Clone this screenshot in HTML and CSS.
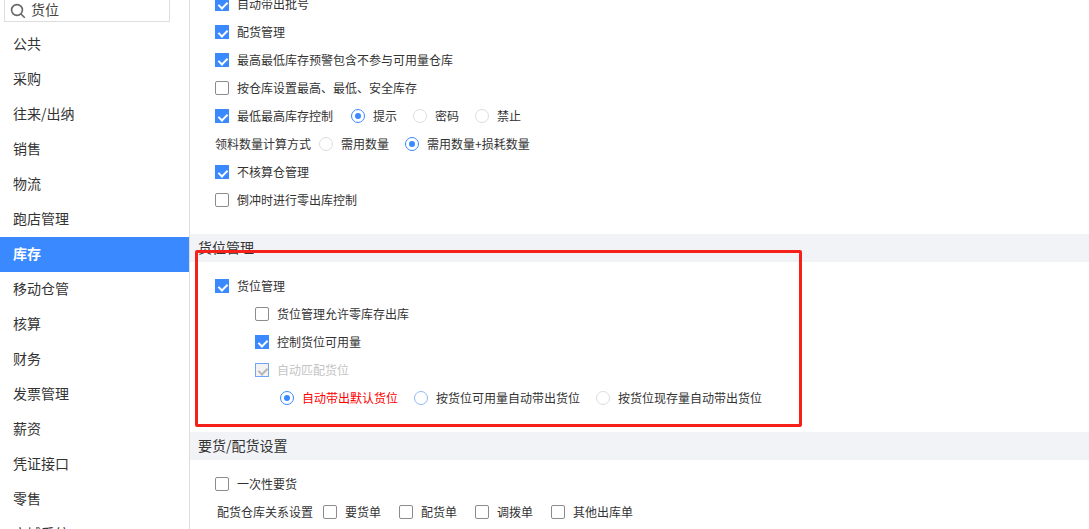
FILE: index.html
```html
<!DOCTYPE html>
<html lang="zh-CN">
<head>
<meta charset="utf-8">
<title>货位设置</title>
<link rel="stylesheet" href="styles.css">
</head>
<body>
<div class="page">
  <aside class="sidebar">
    <div class="search">
      <svg class="search-icon" width="16" height="16" viewBox="0 0 16 16"><circle cx="7" cy="7" r="5.4" fill="none" stroke="#666" stroke-width="1.6"/><path d="M11 11l3.8 3.8" stroke="#666" stroke-width="1.6" fill="none"/></svg>
      <span>货位</span>
    </div>
    <nav class="menu">
      <a class="menu-item">公共</a>
      <a class="menu-item">采购</a>
      <a class="menu-item">往来/出纳</a>
      <a class="menu-item">销售</a>
      <a class="menu-item">物流</a>
      <a class="menu-item">跑店管理</a>
      <a class="menu-item active">库存</a>
      <a class="menu-item">移动仓管</a>
      <a class="menu-item">核算</a>
      <a class="menu-item">财务</a>
      <a class="menu-item">发票管理</a>
      <a class="menu-item">薪资</a>
      <a class="menu-item">凭证接口</a>
      <a class="menu-item">零售</a>
      <a class="menu-item">商城系统</a>
    </nav>
  </aside>
  <main class="content">
    <section class="group group-first">
      <div class="row"><i class="check on"></i><span>自动带出批号</span></div>
      <div class="row"><i class="check on"></i><span>配货管理</span></div>
      <div class="row"><i class="check on"></i><span>最高最低库存预警包含不参与可用量仓库</span></div>
      <div class="row"><i class="check"></i><span>按仓库设置最高、最低、安全库存</span></div>
      <div class="row">
        <i class="check on"></i><span class="label-wide">最低最高库存控制</span>
        <span class="opts"><span class="opt"><i class="radio on"></i>提示</span><span class="opt"><i class="radio"></i>密码</span><span class="opt"><i class="radio"></i>禁止</span></span>
      </div>
      <div class="row">
        <span class="label-tight">领料数量计算方式</span>
        <span class="opts"><span class="opt"><i class="radio"></i>需用数量</span><span class="opt"><i class="radio on"></i>需用数量+损耗数量</span></span>
      </div>
      <div class="row"><i class="check on"></i><span>不核算仓管理</span></div>
      <div class="row"><i class="check"></i><span>倒冲时进行零出库控制</span></div>
    </section>
    <h2 class="section-title first-title">货位管理</h2>
    <section class="group group-bin">
      <div class="row"><i class="check on"></i><span>货位管理</span></div>
      <div class="row sub"><i class="check"></i><span>货位管理允许零库存出库</span></div>
      <div class="row sub"><i class="check on"></i><span>控制货位可用量</span></div>
      <div class="row sub disabled"><i class="check dim"></i><span>自动匹配货位</span></div>
      <div class="row subsub">
        <span class="opts"><span class="opt red"><i class="radio on"></i>自动带出默认货位</span><span class="opt"><i class="radio blue"></i>按货位可用量自动带出货位</span><span class="opt"><i class="radio"></i>按货位现存量自动带出货位</span></span>
      </div>
    </section>
    <h2 class="section-title">要货/配货设置</h2>
    <section class="group group-last">
      <div class="row"><i class="check"></i><span>一次性要货</span></div>
      <div class="row bills">
        <span class="bills-label">配货仓库关系设置</span>
        <span class="bill"><i class="check"></i>要货单</span>
        <span class="bill"><i class="check"></i>配货单</span>
        <span class="bill"><i class="check"></i>调拨单</span>
        <span class="bill"><i class="check"></i>其他出库单</span>
      </div>
    </section>
    <div class="highlight"></div>
  </main>
</div>
</body>
</html>
```
FILE: styles.css
```css
* { box-sizing: border-box; }
html, body { margin: 0; height: 100%; overflow: hidden; background: #fff; }
body { font-family: "Noto Sans CJK SC", "Noto Sans", sans-serif; font-size: 12px; color: #333; }
.page { display: flex; height: 529px; overflow: hidden; }

.sidebar { flex: 0 0 190px; border-right: 1px solid #ddd; }
.search { display: flex; align-items: center; gap: 5px; width: 166px; height: 22px; margin-left: 4px; padding: 0 0 3px 5px; border: 1px solid #ddd; border-top: 0; font-size: 14px; color: #444; }
.search-icon { flex: none; margin-top: 3px; }
.menu { display: flex; flex-direction: column; margin-top: 5px; }
.menu-item { flex: none; height: 35px; line-height: 33px; padding-left: 13px; font-size: 14px; color: #333; white-space: nowrap; }
.menu-item.active { background: #3a89ff; color: #fff; font-weight: 700; }

.content { position: relative; flex: 1; min-width: 0; }
.group { padding-left: 25px; }
.group-first { margin-top: -10px; }
.group-bin { margin-top: 10px; padding-bottom: 20px; }
.group-last { margin-top: 10px; }
.row { display: flex; align-items: center; height: 28px; padding-bottom: 2px; white-space: nowrap; }
.row > i { margin: 2px 8px 0 0; }
.sub { padding-left: 40px; }
.subsub { padding-left: 65px; }
.disabled { color: #c4c4c4; }
.label-wide { margin-right: 18px; }
.label-tight { margin-right: 8px; }
.opts { display: flex; gap: 16px; }
.opt { display: flex; align-items: center; gap: 8px; }
.opt > i, .bill > i { margin-top: 2px; }
.red { color: #f00; }

.check { flex: none; position: relative; display: inline-block; width: 14px; height: 14px; border: 1px solid #8c8c8c; border-radius: 2px; background: #fff; }
.check.on { background: #3a89ff; border-color: #3a89ff; border-radius: 0; }
.check.on::after, .check.dim::after { content: ""; position: absolute; left: 4px; top: 1.5px; width: 4px; height: 7px; border: solid #fff; border-width: 0 2px 2px 0; transform: rotate(45deg); }
.check.dim { border-color: #6ea6f8; border-radius: 0; background: #f2f2f2; }
.check.dim::after { border-color: #b5b5b5; }

.radio { flex: none; position: relative; display: inline-block; width: 14px; height: 14px; border: 1px solid #ddd; border-radius: 50%; background: #fff; }
.radio.on { border-color: #3a89ff; }
.radio.blue { border-color: #8fb9f5; }
.radio.on::after { content: ""; position: absolute; left: 3px; top: 3px; width: 6px; height: 6px; border-radius: 50%; background: #3a89ff; }

.section-title { display: flex; align-items: center; height: 28px; margin: 0; padding: 0 0 2px 8px; background: #f2f3f7; font-size: 14px; font-weight: 400; color: #333; }
.first-title { margin-top: 20px; }

.bills { padding-left: 2px; }
.bills-label { margin-right: 10px; }
.bill { display: flex; align-items: center; gap: 8px; margin-right: 18px; }

.highlight { position: absolute; left: 5px; top: 250px; width: 607px; height: 177px; border: 3px solid #f5201a; border-radius: 2px; pointer-events: none; }
```
